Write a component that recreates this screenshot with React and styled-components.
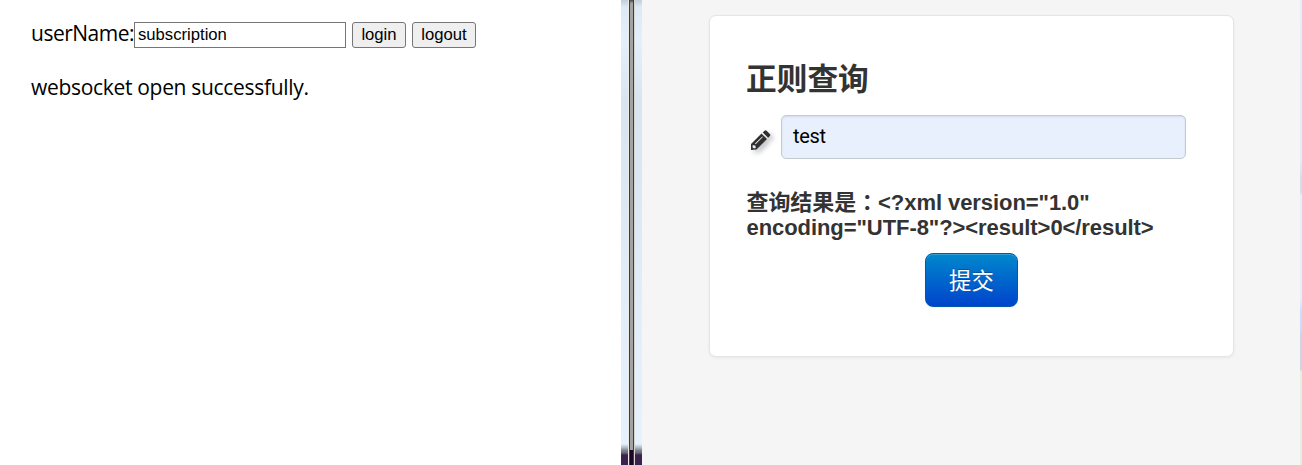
import React from "react";
import styled, { createGlobalStyle } from "styled-components";

const Global = createGlobalStyle`
  * { box-sizing: border-box; }
  body { margin: 0; background: #fff; overflow: hidden; }
  h2, h3, p { margin: 0; }
`;

const Page = styled.div`
  display: flex;
  width: 1302px;
  height: 465px;
`;

const SocketPanel = styled.section`
  flex: 0 0 621px;
  padding: 22px 0 0 31px;
  font: 21px/26px "Open Sans", "Noto Sans CJK SC", sans-serif;
  color: #000;
`;

const LoginRow = styled.div`
  display: flex;
  height: 26px;
`;

const UserLabel = styled.label`
  width: 103px;
  line-height: 22px;
  white-space: nowrap;
  letter-spacing: -0.5px;
`;

const UserInput = styled.input`
  width: 212px;
  height: 26px;
  padding: 0 3px 1px;
  border: 1px solid #767676;
  font: 16.67px "Liberation Sans", Arial, sans-serif;
  color: #000;
  outline: none;
`;

const PlainButton = styled.button`
  width: ${(p) => p.$width}px;
  height: 26px;
  margin-left: 6px;
  padding: 0 0 1px;
  border: 1px solid #767676;
  border-radius: 3px;
  background: #efefef;
  font: 16.67px "Liberation Sans", Arial, sans-serif;
  color: #000;
`;

const Status = styled.p`
  margin-top: 26px;
  white-space: nowrap;
  letter-spacing: -0.31px;
`;

const Divider = styled.div`
  flex: 0 0 21px;
  display: flex;
`;

const Glass = styled.div`
  width: ${(p) => p.$width}px;
  background: linear-gradient(
    180deg,
    #c3cdd9 0,
    #dce9f6 7px,
    #e3effb 40px,
    #d8e4f0 100px,
    #dbe7f3 190px,
    #e2edfa 300px,
    #e5f1fc 444px,
    #a9b4c2 448px,
    #858995 450px,
    #6b6478 453px,
    #3b2350 455px,
    #3b2350 100%
  );
`;

const Edge = styled.div`
  width: 1px;
  background: ${(p) => p.$color};
`;

const Bar = styled.div`
  width: 3px;
  background: linear-gradient(180deg, #444 0, #999 3px, #a3a3a3 4px, #a3a3a3 450px, #1d0524 450px);
`;

const QueryPanel = styled.section`
  flex: 0 0 658px;
  padding: 15px 0 0 67px;
  background: #f5f5f5;
`;

const Card = styled.form`
  width: 525px;
  height: 342px;
  padding: 40px 36px 0;
  display: flex;
  flex-direction: column;
  background: #fff;
  border: 1px solid #e5e5e5;
  border-radius: 7px;
  box-shadow: 0 1px 3px rgba(0, 0, 0, 0.06);
  font-family: "Liberation Sans", "Noto Sans CJK SC", sans-serif;
  color: #333;
`;

const Title = styled.h2`
  height: 46px;
  font-size: 30.7px;
  line-height: 47px;
`;

const Field = styled.div`
  display: flex;
  height: 44px;
  margin-top: 13px;
`;

const PencilSlot = styled.span`
  width: 35px;
  padding: 15px 0 0 4px;
`;

const Pencil = styled.svg`
  display: block;
  overflow: visible;
  filter: drop-shadow(3px 3px 2.5px rgba(50, 60, 80, 0.35));
`;

const QueryInput = styled.input`
  width: 405px;
  height: 44px;
  padding: 0 11px 2px;
  border: 1px solid #c5cad2;
  border-radius: 5px;
  background: #e8f0fe;
  box-shadow: inset 0 1px 2px rgba(0, 0, 0, 0.09);
  font: 20px Roboto, "Liberation Sans", sans-serif;
  letter-spacing: -0.3px;
  color: #000;
  outline: none;
`;

const Result = styled.h3`
  margin: 30px 0 0 0.5px;
  height: 50px;
  font-size: 22px;
  line-height: 25px;
  letter-spacing: -0.07px;
  white-space: nowrap;
`;

const CenteredColon = styled.span`
  font-family: "Noto Sans CJK TC", sans-serif;
  line-height: 1;
`;

const Submit = styled.button`
  align-self: center;
  width: 93px;
  height: 54px;
  margin-top: 14px;
  padding: 0 0 3px;
  border: 1px solid #0557ac;
  border-radius: 8px;
  background: linear-gradient(180deg, #0088cc, #0044cc);
  box-shadow: inset 0 1px 0 rgba(255, 255, 255, 0.2), 0 1px 2px rgba(0, 0, 0, 0.05);
  font: 22.4px "Liberation Sans", "Noto Sans CJK SC", sans-serif;
  color: #fff;
  text-shadow: 0 -1px 0 rgba(0, 0, 0, 0.25);
`;

const RightEdge = styled.div`
  flex: 0 0 2px;
  background: linear-gradient(
    180deg,
    #e2eefd 0,
    #e2edfb 160px,
    #d3deeb 180px,
    #d3deeb 192px,
    #e3effb 196px,
    #e3effb 300px,
    #c7dffa 312px,
    #c7dffa 328px,
    #cdd5e2 335px,
    #cdd5e2 370px,
    #e5eedf 371px
  );
`;

export default function App() {
  return (
    <>
      <Global />
      <Page>
        <SocketPanel>
          <LoginRow>
            <UserLabel htmlFor="user">userName:</UserLabel>
            <UserInput id="user" defaultValue="subscription" />
            <PlainButton $width={54}>login</PlainButton>
            <PlainButton $width={64}>logout</PlainButton>
          </LoginRow>
          <Status>websocket open successfully.</Status>
        </SocketPanel>
        <Divider>
          <Glass $width={7} />
          <Edge $color="#e9eae9" />
          <Edge $color="#3e3c3e" />
          <Bar />
          <Edge $color="#3e3c3e" />
          <Edge $color="#d5d6d0" />
          <Glass $width={7} />
        </Divider>
        <QueryPanel>
          <Card onSubmit={(e) => e.preventDefault()}>
            <Title>正则查询</Title>
            <Field>
              <PencilSlot>
                <Pencil width="21" height="21" viewBox="0 0 21 21">
                  <path
                    fill="#303030"
                    fillRule="evenodd"
                    d="M1 14 11.5 3.5 17 9 6.5 19.5 1 20ZM2.8 15.1 2.5 17.2 4 18.5 5.8 18.1 5.5 15.8ZM5 13.6 5.7 14.2 12.9 7 12.3 6.4Z"
                  />
                  <path fill="#303030" d="M12.7 2.4 14.5.7Q15.5-.2 16.6.8L19.8 4Q20.8 5 19.9 6L18.2 7.8Z" />
                </Pencil>
              </PencilSlot>
              <QueryInput aria-label="query" defaultValue="test" />
            </Field>
            <Result>
              查询结果是<CenteredColon lang="zh-TW">：</CenteredColon>&lt;?xml version="1.0"
              <br />
              encoding="UTF-8"?&gt;&lt;result&gt;0&lt;/result&gt;
            </Result>
            <Submit type="submit">提交</Submit>
          </Card>
        </QueryPanel>
        <RightEdge />
      </Page>
    </>
  );
}
